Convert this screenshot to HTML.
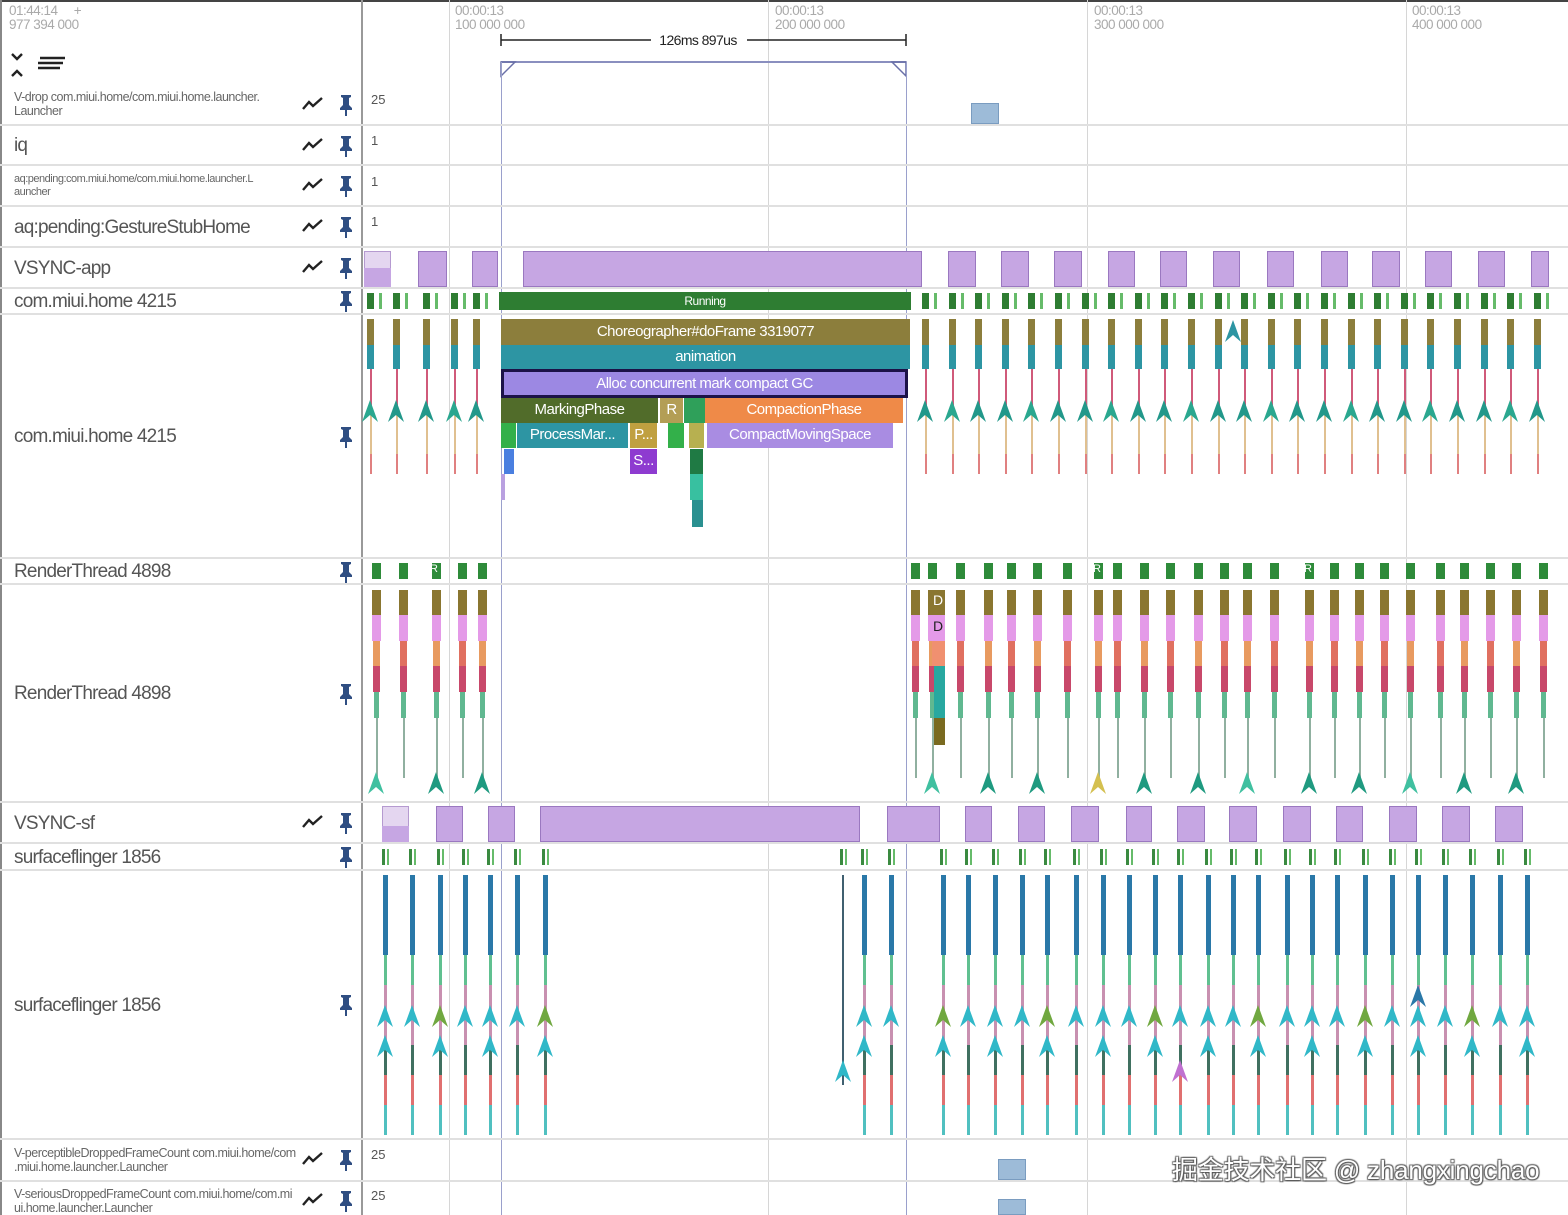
<!DOCTYPE html>
<html><head><meta charset="utf-8">
<style>
*{margin:0;padding:0;box-sizing:border-box}
body{width:1568px;height:1215px;overflow:hidden;background:#fff;font-family:"Liberation Sans","Noto Sans CJK SC",sans-serif;position:relative}
.a{position:absolute}
.lbl{position:absolute;left:14px;color:#555;font-size:19px;letter-spacing:-0.8px;white-space:nowrap}
.sm{position:absolute;left:14px;color:#666;font-size:12.5px;letter-spacing:-0.5px;line-height:14px;width:285px}
.hl{position:absolute;left:0;width:1568px;height:2px;background:#e0e0e0}
.vl{position:absolute;width:1px;background:#d6d6d6}
.num{position:absolute;left:371px;color:#555;font-size:13px}
.sl{position:absolute;color:#fff;font-size:15px;text-align:center;white-space:nowrap;overflow:hidden;line-height:24px;letter-spacing:-0.5px}
.tm{position:absolute;color:#aaa;font-size:13.5px;line-height:14px;letter-spacing:-0.5px}
</style></head><body>
<div class="a" style="left:0;top:0;width:1568px;height:2px;background:#444"></div>
<div class="a" style="left:0;top:0;width:2px;height:1215px;background:#888"></div>
<div class="a" style="left:361px;top:0;width:2px;height:1215px;background:#999"></div>
<div class="vl" style="left:449px;top:0;height:1215px"></div>
<div class="vl" style="left:768px;top:0;height:1215px"></div>
<div class="vl" style="left:1087px;top:0;height:1215px"></div>
<div class="vl" style="left:1406px;top:0;height:1215px"></div>

<div class="tm" style="left:9px;top:4px">01:44:14 &nbsp;&nbsp;&nbsp; +<br>977 394 000</div>
<div class="tm" style="left:455px;top:4px">00:00:13<br>100 000 000</div>
<div class="tm" style="left:775px;top:4px">00:00:13<br>200 000 000</div>
<div class="tm" style="left:1094px;top:4px">00:00:13<br>300 000 000</div>
<div class="tm" style="left:1412px;top:4px">00:00:13<br>400 000 000</div>

<svg class="a" style="left:8px;top:52px" width="60" height="28"><path d="M4 2l5 5 5-5M4 24l5-5 5 5" stroke="#222" stroke-width="2.4" fill="none"/><path d="M32 6h25M30 11h25M30 16h22" stroke="#222" stroke-width="2.6"/></svg>

<svg class="a" style="left:495px;top:30px" width="420" height="50">
<path d="M6 4v12M411 4v12M6 10h150M252 10h159" stroke="#222" stroke-width="1.5"/>
<text x="203" y="15" font-family="Liberation Sans" font-size="14" text-anchor="middle" fill="#222" letter-spacing="-0.6">126ms 897us</text>
<path d="M6 32h405" stroke="#8a8fbf" stroke-width="2"/>
<path d="M6 32v14l14-14zM411 32v14l-14-14z" fill="none" stroke="#6a70a8" stroke-width="1.5"/>
</svg>
<div class="a" style="left:501px;top:62px;width:1px;height:1153px;background:#9aa0cc"></div>
<div class="a" style="left:906px;top:62px;width:1px;height:1153px;background:#9aa0cc"></div>

<div class="hl" style="top:124px"></div><div class="hl" style="top:164px"></div><div class="hl" style="top:205px"></div><div class="hl" style="top:246px"></div><div class="hl" style="top:287px"></div><div class="hl" style="top:313px"></div><div class="hl" style="top:557px"></div><div class="hl" style="top:583px"></div><div class="hl" style="top:801px"></div><div class="hl" style="top:842px"></div><div class="hl" style="top:869px"></div><div class="hl" style="top:1138px"></div><div class="hl" style="top:1180px"></div>

<div class="sm" style="top:90px">V-drop com.miui.home/com.miui.home.launcher.<br>Launcher</div>
<div class="lbl" style="top:135px">iq</div>
<div class="sm" style="top:173px;font-size:11px;line-height:13px">aq:pending:com.miui.home/com.miui.home.launcher.L<br>auncher</div>
<div class="lbl" style="top:217px">aq:pending:GestureStubHome</div>
<div class="lbl" style="top:258px">VSYNC-app</div>
<div class="lbl" style="top:291px">com.miui.home 4215</div>
<div class="lbl" style="top:426px">com.miui.home 4215</div>
<div class="lbl" style="top:561px">RenderThread 4898</div>
<div class="lbl" style="top:683px">RenderThread 4898</div>
<div class="lbl" style="top:813px">VSYNC-sf</div>
<div class="lbl" style="top:847px">surfaceflinger 1856</div>
<div class="lbl" style="top:995px">surfaceflinger 1856</div>
<div class="sm" style="top:1146px">V-perceptibleDroppedFrameCount com.miui.home/com<br>.miui.home.launcher.Launcher</div>
<div class="sm" style="top:1187px">V-seriousDroppedFrameCount com.miui.home/com.mi<br>ui.home.launcher.Launcher</div>

<div class="num" style="top:92px">25</div><div class="num" style="top:133px">1</div><div class="num" style="top:174px">1</div><div class="num" style="top:214px">1</div><div class="num" style="top:1147px">25</div><div class="num" style="top:1188px">25</div>

<div class="a" style="left:971px;top:103px;width:28px;height:21px;background:#9dbbd8;border:1px solid #7a9cc0"></div>
<div class="a" style="left:998px;top:1159px;width:28px;height:21px;background:#9dbbd8;border:1px solid #7a9cc0"></div>
<div class="a" style="left:998px;top:1199px;width:28px;height:16px;background:#9dbbd8;border:1px solid #7a9cc0"></div>

<div id="g"></div>

<div class="sl" style="left:499px;top:292px;width:412px;height:18px;background:#2e7d32;font-size:12px;line-height:18px">Running</div>
<div class="sl" style="left:501px;top:319px;width:409px;height:26px;background:#8c7e3c;line-height:26px">Choreographer#doFrame 3319077</div>
<div class="sl" style="left:501px;top:345px;width:409px;height:24px;background:#2d95a3">animation</div>
<div class="sl" style="left:501px;top:369px;width:407px;height:29px;background:#9c88e3;border:3px solid #1c1248;line-height:23px">Alloc concurrent mark compact GC</div>
<div class="sl" style="left:501px;top:398px;width:157px;height:25px;background:#516c2a">MarkingPhase</div>
<div class="sl" style="left:660px;top:398px;width:23px;height:25px;background:#b39e55">R</div>
<div class="sl" style="left:684px;top:398px;width:21px;height:25px;background:#2fa05a"></div>
<div class="sl" style="left:705px;top:398px;width:198px;height:25px;background:#ef8a48">CompactionPhase</div>
<div class="sl" style="left:501px;top:423px;width:15px;height:25px;background:#33b04a"></div>
<div class="sl" style="left:517px;top:423px;width:111px;height:25px;background:#2d95a3">ProcessMar...</div>
<div class="sl" style="left:630px;top:423px;width:27px;height:25px;background:#c0a040">P...</div>
<div class="sl" style="left:668px;top:423px;width:16px;height:25px;background:#33b04a"></div>
<div class="sl" style="left:689px;top:423px;width:15px;height:25px;background:#b7b050"></div>
<div class="sl" style="left:707px;top:423px;width:186px;height:25px;background:#a98ce2">CompactMovingSpace</div>
<div class="sl" style="left:630px;top:449px;width:27px;height:25px;background:#8e3bd0">S...</div>
<div class="a" style="left:504px;top:449px;width:10px;height:25px;background:#4a7fe0"></div>
<div class="a" style="left:690px;top:449px;width:13px;height:25px;background:#1f7a44"></div>
<div class="a" style="left:690px;top:474px;width:13px;height:26px;background:#38c0a0"></div>
<div class="a" style="left:692px;top:500px;width:11px;height:27px;background:#2a9090"></div>
<div class="a" style="left:501px;top:474px;width:4px;height:26px;background:#b9a0e0"></div>

<div class="a" style="left:1172px;top:1150px;font-size:26px;color:#fff;letter-spacing:-0.2px;text-shadow:1px 1px 1px #555,-1px -1px 1px #666,1px -1px 1px #666,-1px 1px 1px #666;white-space:nowrap">掘金技术社区 @ zhangxingchao</div>

<script>
var g=document.getElementById('g'),h='';
function R(x,y,w,hh,c,ex){h+='<div class="a" style="left:'+x+'px;top:'+y+'px;width:'+w+'px;height:'+hh+'px;background:'+c+';'+(ex||'')+'"></div>';}
function T(x,y,c){h+='<svg class="a" style="left:'+(x-9)+'px;top:'+y+'px" width="18" height="22"><path d="M9 0L17 22L9 15L1 22Z" fill="'+c+'"/></svg>';}
var rows=[[104,1],[145,1],[185,1],[226,1],[267,1],[300,0],[436,0],[571,0],[693,0],[822,1],[856,0],[1004,0],[1159,1],[1200,1]];
rows.forEach(function(r){var y=r[0];
 h+='<svg class="a" style="left:337px;top:'+(y-10)+'px" width="18" height="22"><path d="M4 1h10v2l-2 1v7l3 3v2H3v-2l3-3V4L4 3z M8 16h2v6H8z" fill="#2f4e82"/></svg>';
 if(r[1])h+='<svg class="a" style="left:302px;top:'+(y-7)+'px" width="22" height="14"><path d="M1 12l6-7 4 4 9-8" stroke="#222" stroke-width="2.4" fill="none"/></svg>';});
var va=[[418,447],[472,498],[523,922],[948,976],[1001,1029],[1054,1082],[1108,1135],[1160,1187],[1213,1240],[1267,1294],[1321,1348],[1372,1400],[1425,1452],[1478,1505],[1531,1549]];
R(364,251,27,36,'#e4d6f0','border:1px solid #b59ad0');R(364,268,27,19,'#c6a6e3');
va.forEach(function(v){R(v[0],251,v[1]-v[0],36,'#c6a6e3','border:1px solid #9a78c0');});
var vs=[[382,409],[436,463],[488,515],[540,860],[887,940],[965,992],[1018,1045],[1071,1099],[1126,1152],[1177,1205],[1229,1257],[1283,1311],[1336,1363],[1389,1417],[1442,1470],[1495,1523]];
R(382,806,27,36,'#e4d6f0','border:1px solid #b59ad0');R(382,826,27,16,'#c6a6e3');
vs.slice(1).forEach(function(v){R(v[0],806,v[1]-v[0],36,'#c6a6e3','border:1px solid #9a78c0');});
var hx=[370,396,426,454,476];
for(var x=925;x<1550;x+=26.6)hx.push(Math.round(x));
hx.forEach(function(x,i){R(x-3,293,7,16,'#2e7d32');R(x+9,293,3,16,'#66bb6a');
 R(x-3,319,7,26,'#8c7e3c');R(x-3,345,7,24,'#2d95a3');R(x,369,2,40,'#d05a7a');R(x,409,2,45,'#e0c090');R(x,454,2,20,'#e08080');
 T(x,400,(i%3==0)?'#2aa78f':'#22988a');});
T(1233,320,'#2d95a3');
var rx=[376,403,436,462,482,915,932,960,988,1011,1037,1067,1098,1117,1144,1170,1198,1224,1247,1274,1309,1334,1359,1384,1410,1440,1464,1490,1516,1543];
rx.forEach(function(x,i){R(x-4,563,9,16,'#2e8b3a');
 if(x<500||x>905){R(x-4,590,9,25,'#8a7630');R(x-4,615,9,26,'#e49ae8');R(x-3,641,7,25,(i%2)?'#e07060':'#e89a60');R(x-3,666,7,26,'#c8486a');R(x-2,692,5,26,'#60b890');R(x,718,2,60,'#90b0a0');
 if(i%2==0)T(x,772,i==12?'#d4c050':(i%3?'#1f9a80':'#40c0a0'));}});
R(932,590,13,25,'#8a7630');R(932,615,13,26,'#e49ae8');R(932,641,13,25,'#f09070');R(934,666,11,52,'#28a8a0');R(934,718,11,27,'#7a6a20');
h+='<div class="a" style="left:933px;top:592px;font-size:14px;color:#fff;width:10px">D</div><div class="a" style="left:933px;top:618px;font-size:14px;color:#222">D</div>';
h+='<div class="a" style="left:430px;top:563px;font-size:11px;color:#fff">R</div><div class="a" style="left:1093px;top:563px;font-size:11px;color:#fff">R</div><div class="a" style="left:1304px;top:563px;font-size:11px;color:#fff">R</div>';
var sx=[385,412,440,465,490,517,545,843,864,891,943,968,995,1022,1047,1076,1103,1129,1155,1180,1208,1233,1258,1287,1312,1337,1365,1392,1418,1445,1472,1500,1527];
sx.forEach(function(x,i){R(x-3,849,3,16,'#3a8a40');R(x+2,849,2,16,'#66bb6a');
 if(x<600||x>860){R(x-2,875,5,80,'#2a78a8');R(x-1,955,3,30,'#60c090');R(x-1,985,3,60,'#c890b0');R(x-1,1045,3,30,'#407060');R(x-1,1075,3,30,'#e07070');R(x-1,1105,3,30,'#50c0c0');
 T(x,1005,i%4==2?'#70a840':'#30b8c8');if(i%2==0)T(x,1035,'#30b8c8');}
 else{R(x-1,875,2,210,'#406070');T(x,1060,'#30b8c8');}});
T(1180,1060,'#c070d0');T(1418,985,'#2a78a8');
g.innerHTML=h;
</script>
</body></html>
